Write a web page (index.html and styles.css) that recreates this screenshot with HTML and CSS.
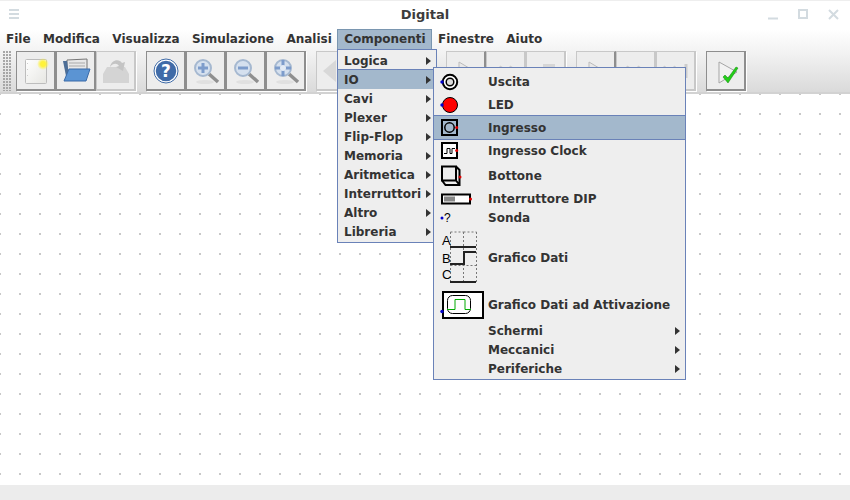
FILE: index.html
```html
<!DOCTYPE html>
<html lang="it">
<head>
<meta charset="utf-8">
<title>Digital</title>
<link rel="stylesheet" href="styles.css">
</head>
<body>
<div class="app">
  <header class="titlebar">
    <svg class="wm-menu" width="10" height="11" viewBox="0 0 10 11"><path d="M0 1h10M0 5h10M0 9h10" stroke="#d3dbe0" stroke-width="2"/></svg>
    <div class="title">Digital</div>
    <div class="wm-buttons">
      <svg width="11" height="11" viewBox="0 0 11 11"><path d="M0 9.500h10" stroke="#d3dbe0" stroke-width="2"/></svg>
      <svg width="11" height="11" viewBox="0 0 11 11"><rect x="1" y="1" width="8" height="8" fill="none" stroke="#d3dbe0" stroke-width="2"/></svg>
      <svg width="11" height="11" viewBox="0 0 11 11"><path d="M1 1l9 9M10 1l-9 9" stroke="#d3dbe0" stroke-width="2"/></svg>
    </div>
  </header>
  <nav class="menubar">
    <span class="menu">File</span><span class="menu">Modifica</span><span class="menu">Visualizza</span><span class="menu">Simulazione</span><span class="menu">Analisi</span><span class="menu active">Componenti</span><span class="menu">Finestre</span><span class="menu">Aiuto</span>
  </nav>
  <div class="toolbar">
    <div class="grip"></div>
    <div class="group">
      <button class="tool"><svg width="32" height="32" viewBox="0 0 32 32"><defs><radialGradient id="star"><stop offset=".4" stop-color="#fff23a"/><stop offset="1" stop-color="#fff23a" stop-opacity="0"/></radialGradient><linearGradient id="page" x1="0" y1="0" x2="1" y2="1"><stop offset="0" stop-color="#fff"/><stop offset="1" stop-color="#e6e6e2"/></linearGradient></defs><rect x="5.500" y="4.500" width="21" height="24" rx="1" fill="url(#page)" stroke="#bdbdbd"/><path d="M7.500 8v18" stroke="#ccc" stroke-dasharray="1 5"/><circle cx="23" cy="9" r="6" fill="url(#star)"/></svg></button>
      <button class="tool"><svg width="32" height="32" viewBox="0 0 32 32"><path d="M7 5l20 -1 0 18H7z" fill="#e8e8e8" stroke="#777"/><path d="M9 8h16M9 11h16" stroke="#aaa"/><path d="M3 6h4l3 20H7z" fill="#4d6e96"/><path d="M9 14h21l-4 12H4z" fill="#5b94d3" stroke="#3b6ba8"/></svg></button>
      <button class="tool off"><svg width="32" height="32" viewBox="0 0 32 32"><path d="M3 19l4-7h18l4 7v9H3z" fill="#d4d4d4"/><path d="M10 12c1-7 9-9 12-4l3-1-2 9-7-4 3-1c-2-3-6-3-9 1z" fill="#c4c4c4"/></svg></button>
    </div>
    <div class="group">
      <button class="tool"><svg width="32" height="32" viewBox="0 0 32 32"><circle cx="16" cy="16" r="11" fill="#3f6ba8" stroke="#fff" stroke-width="1.500"/><circle cx="16" cy="16" r="12" fill="none" stroke="#3f6ba8"/><text x="16" y="22" class="help">?</text></svg></button>
      <button class="tool"><svg width="32" height="32" viewBox="0 0 32 32"><use href="#lens"/><path d="M8 13h10M13 8v10" stroke="#7d9ccb" stroke-width="3"/></svg></button>
      <button class="tool"><svg width="32" height="32" viewBox="0 0 32 32"><use href="#lens"/><path d="M8 13h10" stroke="#7d9ccb" stroke-width="3"/></svg></button>
      <button class="tool"><svg width="32" height="32" viewBox="0 0 32 32"><use href="#lens"/><path d="M5 13h16M13 5v16" stroke="#7d9ccb" stroke-width="3"/><circle cx="13" cy="13" r="3" fill="#e3ebf5"/></svg></button>
    </div>
    <div class="group">
      <button class="tool off"><svg width="32" height="32" viewBox="0 0 32 32"><path d="M3 16l13-11v22z" fill="#d8d8d8"/></svg></button>
      <button class="tool off"></button>
      <button class="tool off"></button>
    </div>
    <div class="group">
      <button class="tool off half"><svg width="32" height="32" viewBox="0 0 32 32"><use href="#play"/></svg></button>
      <button class="tool off"><svg width="32" height="32" viewBox="0 0 32 32"><path d="M10 11l9 5-9 5zM20 11l9 5-9 5z" fill="#e4e4e4" stroke="#ccc"/></svg></button>
      <button class="tool off"><svg width="32" height="32" viewBox="0 0 32 32"><path d="M13 9h12v14H13z" fill="#d6d6d6"/></svg></button>
    </div>
    <div class="group">
      <button class="tool off half"><svg width="32" height="32" viewBox="0 0 32 32"><use href="#play"/></svg></button>
      <button class="tool off"><svg width="32" height="32" viewBox="0 0 32 32"><path d="M7 11l9 5-9 5zM18 11l9 5-9 5z" fill="#e4e4e4" stroke="#ccc"/></svg></button>
      <button class="tool off"><svg width="32" height="32" viewBox="0 0 32 32"><path d="M4 11l8 5-8 5zM14 11l8 5-8 5z" fill="#e4e4e4" stroke="#ccc"/><path d="M26 9v14" stroke="#ccc" stroke-width="3"/></svg></button>
    </div>
    <div class="group">
      <button class="tool"><svg width="32" height="32" viewBox="0 0 32 32"><path d="M9 7l18 10-18 11z" fill="#f2f2f2" stroke="#a5a5a5"/><path d="M13 22l5 6 10-15-2-1-8 11-3-3z" fill="#22d018" stroke="#14800f" stroke-width=".5"/></svg></button>
    </div>
  </div>
  <main class="canvas"></main>
  <footer class="status"></footer>

  <ul class="popup popup-main">
    <li class="row">Logica<i class="arrow"></i></li>
    <li class="row selected">IO<i class="arrow"></i></li>
    <li class="row">Cavi<i class="arrow"></i></li>
    <li class="row">Plexer<i class="arrow"></i></li>
    <li class="row">Flip-Flop<i class="arrow"></i></li>
    <li class="row">Memoria<i class="arrow"></i></li>
    <li class="row">Aritmetica<i class="arrow"></i></li>
    <li class="row">Interruttori<i class="arrow"></i></li>
    <li class="row">Altro<i class="arrow"></i></li>
    <li class="row">Libreria<i class="arrow"></i></li>
  </ul>

  <ul class="popup popup-sub">
    <li class="row sub h23"><span class="ico"><svg width="24" height="20" viewBox="0 0 24 20"><circle cx="12" cy="10" r="7.200" fill="#fff" stroke="#000" stroke-width="2"/><circle cx="12" cy="10" r="3.800" fill="#ddd" stroke="#000" stroke-width="1.500"/><circle cx="4" cy="10" r="1.700" fill="#00c"/></svg></span>Uscita</li>
    <li class="row sub h23"><span class="ico"><svg width="24" height="20" viewBox="0 0 24 20"><circle cx="12" cy="10" r="7.500" fill="#f00" stroke="#000"/><circle cx="4" cy="10" r="1.700" fill="#00c"/></svg></span>LED</li>
    <li class="row sub h23 selected"><span class="ico"><svg width="24" height="20" viewBox="0 0 24 20"><rect x="4" y="2" width="15" height="15" fill="none" stroke="#000" stroke-width="2"/><circle cx="11.500" cy="9.500" r="4.700" fill="none" stroke="#000" stroke-width="1.500"/><circle cx="18.700" cy="9.500" r="1.500" fill="#d00"/></svg></span>Ingresso</li>
    <li class="row sub h23"><span class="ico"><svg width="24" height="20" viewBox="0 0 24 20"><rect x="4" y="2" width="15" height="15" fill="#fff" stroke="#000" stroke-width="2"/><path d="M6 12.500h3V7.500h3v5h2V7.500h3" fill="none" stroke="#000"/><circle cx="18.700" cy="9.500" r="1.500" fill="#d00"/></svg></span>Ingresso Clock</li>
    <li class="row sub h27"><span class="ico"><svg width="24" height="24" viewBox="0 0 24 24"><path d="M4 2.500h14v14H4zM18 2.500l3.500 3.500v15H7.500L4 16.500M18 16.500l3.500 4.500" fill="none" stroke="#000" stroke-width="2"/><circle cx="22" cy="13" r="1.500" fill="#d00"/></svg></span>Bottone</li>
    <li class="row sub h19"><span class="ico"><svg width="34" height="14" viewBox="0 0 34 14"><rect x="4" y="2.500" width="28" height="9" fill="#fff" stroke="#000" stroke-width="2"/><rect x="6" y="4.500" width="11" height="5" fill="#888"/><circle cx="32.500" cy="7" r="1.500" fill="#d00"/></svg></span>Interruttore DIP</li>
    <li class="row sub h19"><span class="ico"><svg width="24" height="16" viewBox="0 0 24 16"><circle cx="4" cy="8" r="1.500" fill="#00c"/><text x="6" y="12" class="probe">?</text></svg></span>Sonda</li>
    <li class="row sub h61"><span class="ico"><svg width="40" height="54" viewBox="0 0 40 54"><path d="M12.500 1h13M25.500 1h13M12.500 1v51M25.500 1v51M38.500 1v51M12.500 34.500h26" fill="none" stroke="#777" stroke-dasharray="2 2"/><path d="M12 16h26M12 33h14V21h12M12 51h26" fill="none" stroke="#222" stroke-width="2"/><text x="4" y="14" class="lab">A</text><text x="4" y="32" class="lab">B</text><text x="4" y="48" class="lab">C</text></svg></span>Grafico Dati</li>
    <li class="row sub h33"><span class="ico"><svg width="48" height="30" viewBox="0 0 48 30"><rect x="5" y="2" width="40" height="26" fill="#fff" stroke="#000" stroke-width="2"/><rect x="9.500" y="5.500" width="23" height="18" rx="5" fill="none" stroke="#000"/><path d="M9 19.500h8V9.500h10v10h6" fill="none" stroke="#0a0"/><circle cx="4" cy="21.500" r="1.700" fill="#00c"/></svg></span>Grafico Dati ad Attivazione</li>
    <li class="row sub h19"><span class="ico"></span>Schermi<i class="arrow"></i></li>
    <li class="row sub h19"><span class="ico"></span>Meccanici<i class="arrow"></i></li>
    <li class="row sub h19"><span class="ico"></span>Periferiche<i class="arrow"></i></li>
  </ul>

  <svg class="defs" width="0" height="0">
    <defs>
      <g id="lens"><ellipse cx="15" cy="27" rx="9" ry="2" fill="#e0e0e0"/><path d="M19 19l9 8" stroke="#8f8f8f" stroke-width="3.500"/><circle cx="13" cy="13" r="8" fill="#d5e0ee" stroke="#a5b8d0" stroke-width="2"/></g>
      <g id="play"><path d="M9 7l15 9-15 9z" fill="#e8e8e8" stroke="#bbb"/></g>
    </defs>
  </svg>
</div>
</body>
</html>
```
FILE: styles.css
```css
* { box-sizing: border-box; }
html, body { margin: 0; padding: 0; }
body {
  width: 850px;
  height: 500px;
  overflow: hidden;
  font-family: "DejaVu Sans", sans-serif;
  font-weight: 700;
  font-size: 12px;
  color: #333;
}
.app {
  position: relative;
  width: 850px;
  height: 500px;
  display: flex;
  flex-direction: column;
  background: #fff;
}
.titlebar {
  position: relative;
  height: 29px;
  flex: none;
  display: flex;
  align-items: center;
  justify-content: space-between;
  padding: 0 11px 1px 9px;
  border-top: 1px solid #eee;
  background: #fff;
}
.title {
  position: absolute;
  left: 0;
  right: 0;
  text-align: center;
  font-size: 13px;
  color: #3c3c3c;
}
.wm-buttons { display: flex; gap: 19px; }
.menubar {
  height: 21px;
  flex: none;
  display: flex;
  padding-left: 0;
  background: linear-gradient(#fff, #f4f4f4);
}
.menu {
  padding: 0 5.7px;
  line-height: 19px;
  height: 21px;
  border: 1px solid transparent;
  margin-right: -1px;
}
.menu:first-child { padding-left: 5px; }
.menu.active {
  background: #a3b8cc;
  border-color: #7a96b0;
}
.toolbar {
  height: 44px;
  flex: none;
  display: flex;
  align-items: flex-start;
  padding-top: 1px;
  border-bottom: 2px solid #d2d2d2;
  background: linear-gradient(#f4f4f4, #dadada);
}
.grip {
  width: 16px;
  height: 40px;
  background-image: radial-gradient(circle at 1px 1px, #a2a2a2 0.7px, transparent 0.8px);
  background-size: 3px 3px;
  clip-path: inset(0 4px 0 3px);
}
.group { display: flex; margin-right: 10px; }
.tool {
  width: 40px;
  height: 40px;
  padding: 0;
  display: flex;
  align-items: center;
  justify-content: center;
  background: #ededed;
  border: 1px solid #8e8e8e;
  border-right-width: 2px;
  border-bottom-width: 2px;
  box-shadow: 1px 1px 0 #fff;
}
.tool.off { border-color: #c8c8c8; }
.tool.half { border-right-color: #8e8e8e; }
.help { font: 700 17px "DejaVu Sans", sans-serif; fill: #fff; text-anchor: middle; }
.canvas {
  flex: 1;
  background-color: #fff;
  background-image: radial-gradient(circle at 1px 1px, #c8c8c8 1.2px, transparent 1.2px);
  background-size: 20px 20px;
  background-position: -1px -1px;
}
.status { height: 15px; flex: none; background: #ececec; }
.popup {
  position: absolute;
  margin: 0;
  padding: 0;
  list-style: none;
  background: #eee;
  border: 1px solid #6a82b8;
}
.popup-main { left: 337px; top: 49px; width: 100px; padding: 1px 0 1px; }
.popup-sub { left: 433px; top: 67px; width: 253px; padding: 2px 0 1px; }
.row {
  position: relative;
  height: 19px;
  display: flex;
  align-items: center;
  padding-left: 6px;
  white-space: nowrap;
}
.row.selected {
  background: #a3b8cc;
  box-shadow: 0 -1px 0 #6a82b8, 0 1px 0 #6a82b8;
}
.popup-main .row.selected { box-shadow: 0 -1px 0 #6a82b8; }
.arrow {
  position: absolute;
  right: 5px;
  top: 50%;
  margin-top: -4px;
  width: 0;
  height: 0;
  border-left: 5px solid #333;
  border-top: 4px solid transparent;
  border-bottom: 4px solid transparent;
}
.sub { padding-left: 0; }
.ico {
  width: 54px;
  flex: none;
  display: flex;
  align-items: center;
  padding-left: 4px;
}
.h19 { height: 19px; }
.h23 { height: 23px; }
.h27 { height: 27px; }
.h33 { height: 33px; }
.h61 { height: 61px; }
.probe { font: 400 12px "Liberation Sans", sans-serif; fill: #000; }
.lab { font: 400 13px "Liberation Sans", sans-serif; fill: #000; }
.defs { position: absolute; }
```
